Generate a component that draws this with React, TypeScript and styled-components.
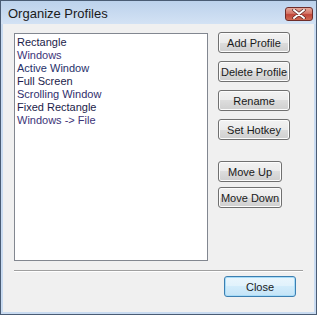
import React from 'react';
import styled, { createGlobalStyle } from 'styled-components';

const GlobalStyle = createGlobalStyle`
  html, body {
    margin: 0;
    padding: 0;
    background: #ffffff;
  }
  * {
    box-sizing: border-box;
  }
`;

const Frame = styled.div`
  width: 317px;
  height: 315px;
  border: 1px solid #4a5c74;
  background: #c9dbf1;
  padding: 0 2px 2px 2px;
  display: flex;
  flex-direction: column;
  font-family: "Liberation Sans", Tahoma, sans-serif;
`;

const TitleBar = styled.div`
  height: 23px;
  margin: 0 -2px;
  padding: 0 3px 0 7px;
  display: flex;
  align-items: center;
  justify-content: space-between;
  background: linear-gradient(#bcd2ec, #d3e2f4);
`;

const Title = styled.span`
  font-size: 13px;
  color: #1a1a1a;
  margin-top: 1px;
`;

const CloseX = styled.div`
  width: 28px;
  height: 14px;
  margin-top: 2px;
  border: 1px solid #6e2d2a;
  border-radius: 3px;
  background: linear-gradient(#e6a99c 0%, #d47566 45%, #c0463a 55%, #cf6a52 100%);
  display: flex;
  align-items: center;
  justify-content: center;
`;

const Client = styled.div`
  flex: 1;
  background: #f0f0f0;
  padding: 9px 11px 0 11px;
  display: flex;
  flex-direction: column;
`;

const MainRow = styled.div`
  display: flex;
  gap: 10px;
`;

const ListBox = styled.div`
  width: 194px;
  height: 228px;
  background: #ffffff;
  border: 1px solid #828790;
  padding: 2px 2px;
`;

const ListItem = styled.div<{ $tone: string }>`
  height: 13px;
  line-height: 13px;
  font-size: 11px;
  color: ${p => p.$tone};
  white-space: nowrap;
`;

const ButtonColumn = styled.div`
  display: flex;
  flex-direction: column;
  gap: 8px;
  margin-top: -1px;
`;

const MoveGroup = styled.div`
  display: flex;
  flex-direction: column;
  gap: 5px;
  margin-top: 13px;
`;

const Button = styled.button<{ $w?: number; $default?: boolean }>`
  width: ${p => p.$w ?? 72}px;
  height: 21px;
  padding: 0;
  font-family: "Liberation Sans", Tahoma, sans-serif;
  font-size: 11px;
  color: #1a1a1a;
  white-space: nowrap;
  border-radius: 3px;
  border: 1px solid ${p => (p.$default ? '#3c7fb1' : '#707070')};
  background: ${p =>
    p.$default
      ? 'linear-gradient(#eaf6fd 0%, #e0f2fc 50%, #d2ecfb 50%, #c4e4f7 100%)'
      : 'linear-gradient(#f2f2f2 0%, #ebebeb 50%, #dddddd 50%, #cfcfcf 100%)'};
  box-shadow: inset 0 0 0 1px ${p => (p.$default ? '#a8dcf8' : '#fcfcfc')};
  display: flex;
  align-items: center;
  justify-content: center;
`;

const Separator = styled.div`
  margin-top: 9px;
  height: 2px;
  border-top: 1px solid #a0a0a0;
  border-bottom: 1px solid #ffffff;
`;

const Footer = styled.div`
  display: flex;
  justify-content: flex-end;
  padding: 4px 7px 0 0;
`;

const profiles = [
  { name: 'Rectangle', tone: '#1c1c4a' },
  { name: 'Windows', tone: '#3c3478' },
  { name: 'Active Window', tone: '#26306a' },
  { name: 'Full Screen', tone: '#1c1c4a' },
  { name: 'Scrolling Window', tone: '#302e6c' },
  { name: 'Fixed Rectangle', tone: '#1c1c4a' },
  { name: 'Windows -> File', tone: '#3c3478' },
];

function CloseGlyph() {
  return (
    <svg width="14" height="10" viewBox="0 0 14 10">
      <path d="M2 1 L12 9 M12 1 L2 9" stroke="#5a2420" strokeWidth="3.4" strokeLinecap="round" />
      <path d="M2 1 L12 9 M12 1 L2 9" stroke="#ffffff" strokeWidth="2" strokeLinecap="round" />
    </svg>
  );
}

export default function App() {
  return (
    <>
      <GlobalStyle />
      <Frame>
        <TitleBar>
          <Title>Organize Profiles</Title>
          <CloseX>
            <CloseGlyph />
          </CloseX>
        </TitleBar>
        <Client>
          <MainRow>
            <ListBox>
              {profiles.map(p => (
                <ListItem key={p.name} $tone={p.tone}>{p.name}</ListItem>
              ))}
            </ListBox>
            <ButtonColumn>
              <Button>Add Profile</Button>
              <Button>Delete Profile</Button>
              <Button>Rename</Button>
              <Button>Set Hotkey</Button>
              <MoveGroup>
                <Button $w={64}>Move Up</Button>
                <Button $w={64}>Move Down</Button>
              </MoveGroup>
            </ButtonColumn>
          </MainRow>
          <Separator />
          <Footer>
            <Button $default>Close</Button>
          </Footer>
        </Client>
      </Frame>
    </>
  );
}
